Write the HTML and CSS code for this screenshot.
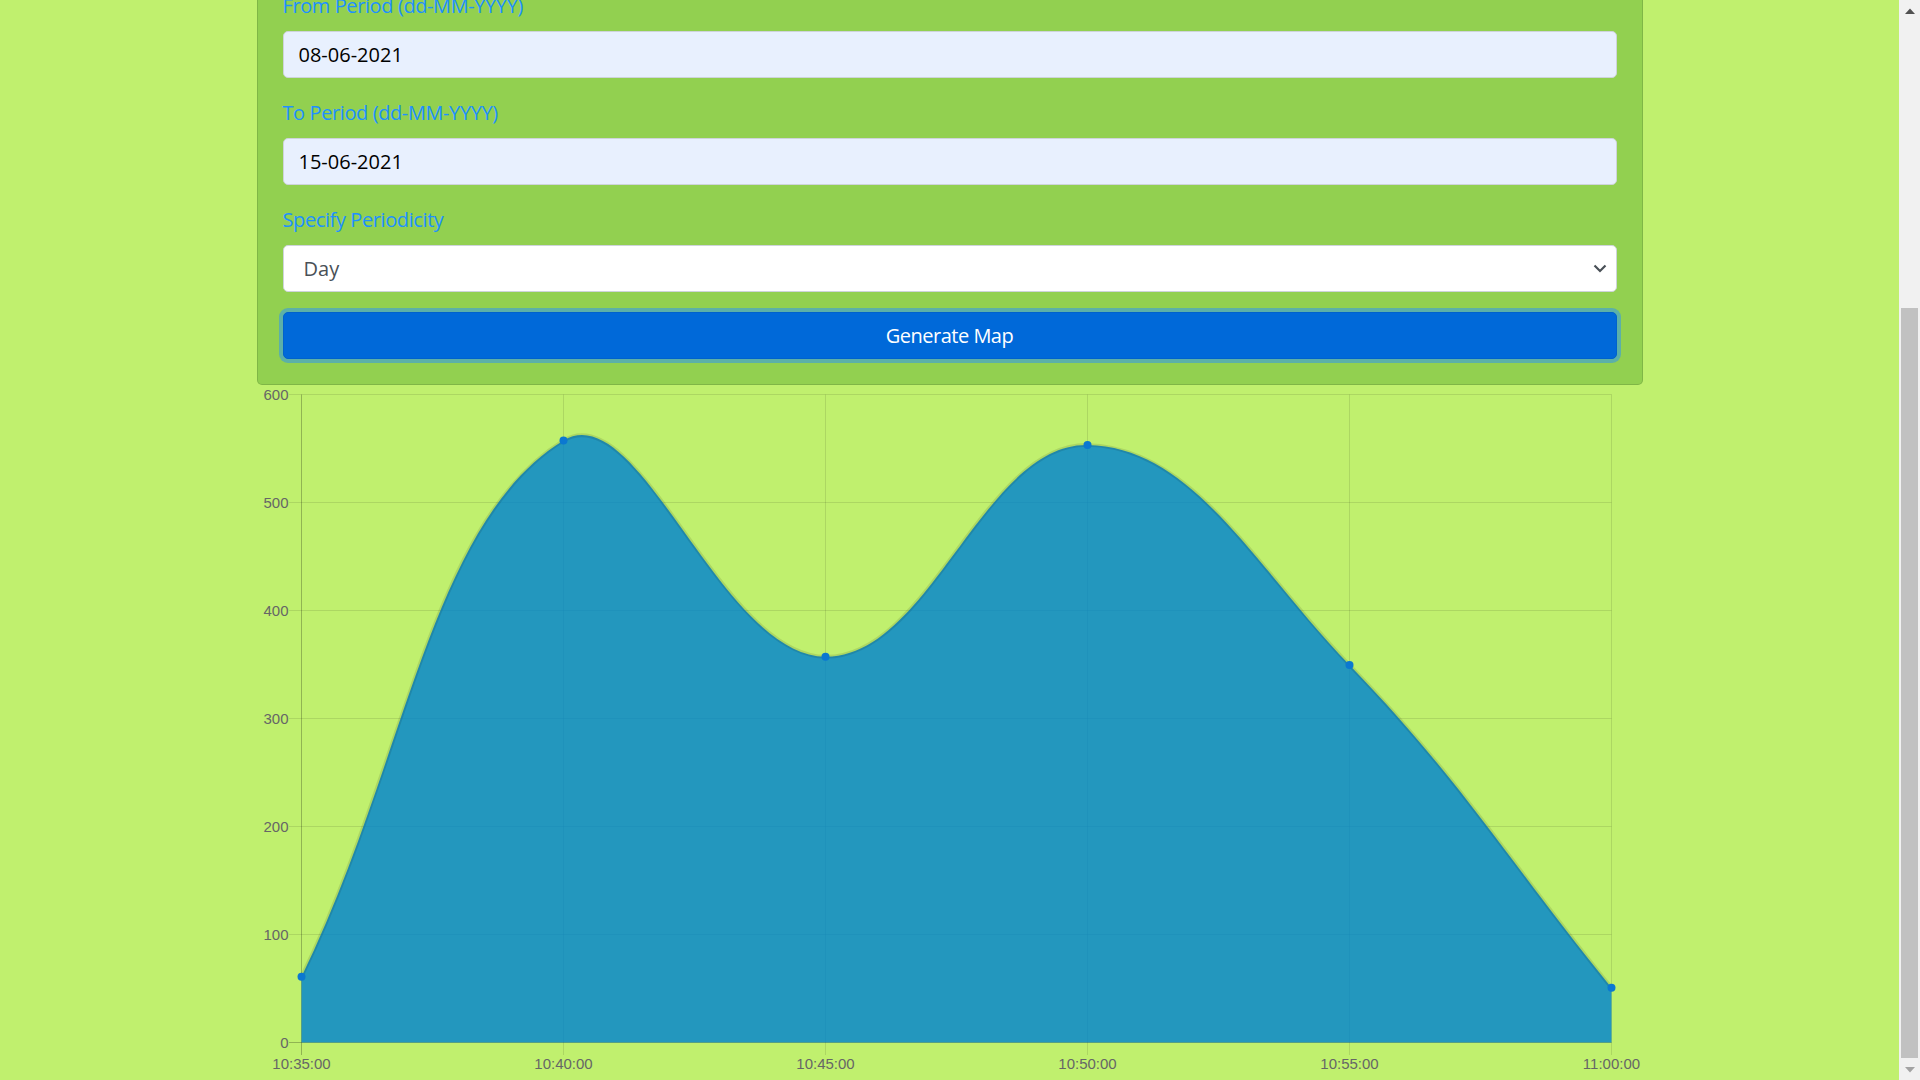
FILE: index.html
```html
<!DOCTYPE html>
<html lang="en">
<head>
<meta charset="utf-8">
<title>Generate Map</title>
<link rel="stylesheet" href="styles.css">
</head>
<body>
<div class="viewport">
  <main class="page">
    <div class="container">
      <form class="card">
        <div class="group">
          <label class="label" for="from">From Period (dd-MM-YYYY)</label>
          <input class="field autofill" id="from" type="text" value="08-06-2021" readonly>
        </div>
        <div class="group">
          <label class="label" for="to">To Period (dd-MM-YYYY)</label>
          <input class="field autofill" id="to" type="text" value="15-06-2021" readonly>
        </div>
        <div class="group">
          <label class="label">Specify Periodicity</label>
          <div class="field select">
            <span>Day</span>
            <svg class="chevron" width="14" height="9" viewBox="0 0 14 9"><path d="M1.5 1.5 L7 7 L12.5 1.5" fill="none" stroke="#495057" stroke-width="2.2"/></svg>
          </div>
        </div>
        <button class="btn" type="button">Generate Map</button>
      </form>

      <svg class="chart" width="1386" height="693" viewBox="0 0 1386 693">
        <g stroke="rgba(0,0,0,0.1)" stroke-width="1">
          <line x1="32" y1="549.5" x2="1354.5" y2="549.5"/>
          <line x1="32" y1="441.5" x2="1354.5" y2="441.5"/>
          <line x1="32" y1="333.5" x2="1354.5" y2="333.5"/>
          <line x1="32" y1="225.5" x2="1354.5" y2="225.5"/>
          <line x1="32" y1="117.5" x2="1354.5" y2="117.5"/>
          <line x1="32" y1="9.5" x2="1354.5" y2="9.5"/>
          <line x1="306.5" y1="9.5" x2="306.5" y2="670"/>
          <line x1="568.5" y1="9.5" x2="568.5" y2="670"/>
          <line x1="830.5" y1="9.5" x2="830.5" y2="670"/>
          <line x1="1092.5" y1="9.5" x2="1092.5" y2="670"/>
          <line x1="1354.5" y1="9.5" x2="1354.5" y2="670"/>
        </g>
        <g stroke="rgba(0,0,0,0.25)" stroke-width="1">
          <line x1="32" y1="657.5" x2="1354.5" y2="657.5"/>
          <line x1="44.5" y1="9.5" x2="44.5" y2="670"/>
        </g>
        <path d="M44.5,591.7 C149.3,377.2 172.9,137.1 306.5,55.5 C382.5,9.5 463.3,270.8 568.5,271.7 C672.9,272.6 726.5,58.4 830.5,60 C936.1,61.7 997.9,182 1092.5,280 C1207.5,399.1 1249.7,473.6 1354.5,602.7 L1354.5,657.5 L44.5,657.5 Z" fill="rgba(0,130,207,0.82)"/>
        <path d="M44.5,591.7 C149.3,377.2 172.9,137.1 306.5,55.5 C382.5,9.5 463.3,270.8 568.5,271.7 C672.9,272.6 726.5,58.4 830.5,60 C936.1,61.7 997.9,182 1092.5,280 C1207.5,399.1 1249.7,473.6 1354.5,602.7" fill="none" stroke="rgba(0,0,0,0.1)" stroke-width="3.75"/>
        <g fill="#0b78d1">
          <circle cx="44.5" cy="591.7" r="4"/>
          <circle cx="306.5" cy="55.5" r="4"/>
          <circle cx="568.5" cy="271.7" r="4"/>
          <circle cx="830.5" cy="60" r="4"/>
          <circle cx="1092.5" cy="280" r="4"/>
          <circle cx="1354.5" cy="602.7" r="4"/>
        </g>
        <g class="ticks" text-anchor="end">
          <text x="31.5" y="662.9">0</text>
          <text x="31.5" y="554.9">100</text>
          <text x="31.5" y="446.9">200</text>
          <text x="31.5" y="338.9">300</text>
          <text x="31.5" y="230.9">400</text>
          <text x="31.5" y="122.9">500</text>
          <text x="31.5" y="14.9">600</text>
        </g>
        <g class="ticks" text-anchor="middle">
          <text x="44.5" y="684.3">10:35:00</text>
          <text x="306.5" y="684.3">10:40:00</text>
          <text x="568.5" y="684.3">10:45:00</text>
          <text x="830.5" y="684.3">10:50:00</text>
          <text x="1092.5" y="684.3">10:55:00</text>
          <text x="1354.5" y="684.3">11:00:00</text>
        </g>
      </svg>
    </div>
  </main>
  <div class="scrollbar">
    <div class="sb-btn">
      <svg width="10" height="6" viewBox="0 0 10 6"><path d="M0 6 L5 0.5 L10 6 Z" fill="#505050"/></svg>
    </div>
    <div class="sb-track"><div class="sb-thumb"></div></div>
    <div class="sb-btn">
      <svg width="10" height="6" viewBox="0 0 10 6"><path d="M0 0 L5 5.5 L10 0 Z" fill="#a3a3a3"/></svg>
    </div>
  </div>
</div>
</body>
</html>
```
FILE: styles.css
```css
* { box-sizing: border-box; }

html, body {
  margin: 0;
  padding: 0;
  height: 100%;
  overflow: hidden;
}

body {
  background: #c0f06e;
  font-family: "Open Sans", "Noto Sans", sans-serif;
  color: #212529;
}

.viewport {
  display: flex;
  height: 1080px;
}

.page {
  flex: 1;
  min-width: 0;
  overflow: hidden;
}

.container {
  width: 1386px;
  margin: 0 auto;
}

.card {
  margin: -35px 0 0;
  background: #92d050;
  border: 1px solid rgba(0, 0, 0, 0.125);
  border-radius: 5px;
  padding: 25px;
}

.group {
  margin-bottom: 20px;
}

.label {
  display: block;
  color: #1e90ff;
  font-size: 20px;
  line-height: 30px;
  letter-spacing: -0.4px;
  margin-bottom: 10px;
}

.field {
  display: block;
  width: 100%;
  height: 47px;
  margin: 0;
  padding: 0 15px;
  border: 1px solid #ced4da;
  border-radius: 5px;
  font-family: "Open Sans", "Noto Sans", sans-serif;
  font-size: 20px;
  line-height: 30px;
  outline: none;
}

.autofill {
  background: #e8f0fe;
  color: #000;
}

.select {
  display: flex;
  align-items: center;
  justify-content: space-between;
  background: #fff;
  color: #495057;
  padding: 0 9px 0 20px;
}

.chevron {
  display: block;
}

.btn {
  display: block;
  width: 100%;
  height: 47px;
  margin: 0;
  padding: 0;
  background: #0069d9;
  border: 1px solid #0062cc;
  border-radius: 5px;
  box-shadow: 0 0 0 4px rgba(38, 143, 255, 0.5);
  color: #fff;
  font-family: "Open Sans", "Noto Sans", sans-serif;
  font-size: 20px;
  line-height: 30px;
  letter-spacing: -0.5px;
  text-align: center;
}

.chart {
  display: block;
}

.ticks {
  font-family: "Liberation Sans", Arial, sans-serif;
  font-size: 15px;
  fill: #666;
}

.scrollbar {
  width: 21px;
  flex: none;
  display: flex;
  flex-direction: column;
  background: #f1f1f1;
}

.sb-btn {
  height: 21px;
  flex: none;
  display: flex;
  align-items: center;
  justify-content: center;
}

.sb-btn svg {
  display: block;
}

.sb-track {
  flex: 1;
  display: flex;
  flex-direction: column;
  padding: 287px 2px 1px;
}

.sb-thumb {
  flex: 1;
  background: #c1c1c1;
}
```
